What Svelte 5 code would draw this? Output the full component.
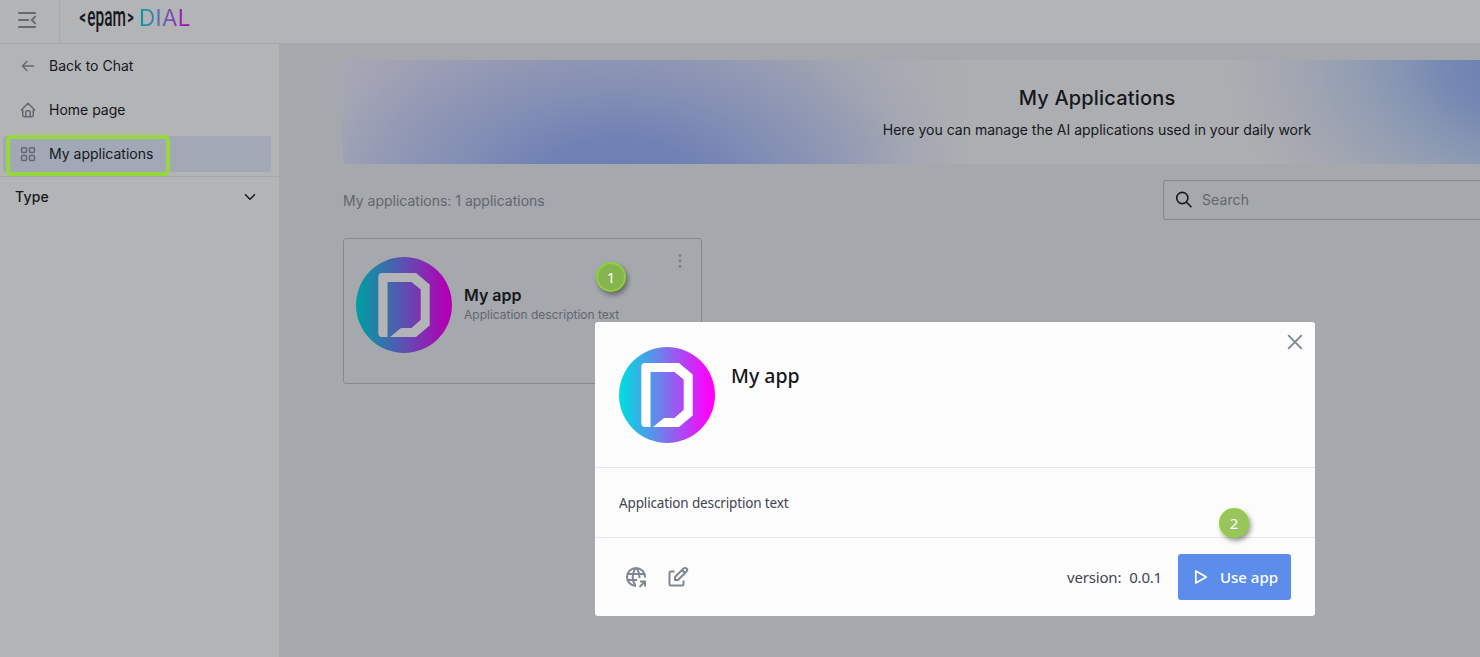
<script>
  const nav = [
    { label: 'Back to Chat', icon: 'back' },
    { label: 'Home page', icon: 'home' },
    { label: 'My applications', icon: 'apps', active: true }
  ];
</script>

{#snippet appLogo(id, from, mid, to, letter)}
  <svg class="app-logo" width="96" height="96" viewBox="0 0 96 96">
    <defs>
      <linearGradient id={id} x1="0" y1="0" x2="1" y2="0">
        <stop offset="0.02" stop-color={from} />
        <stop offset="0.5" stop-color={mid} />
        <stop offset="0.94" stop-color={to} />
      </linearGradient>
    </defs>
    <circle cx="48" cy="48" r="48" fill="url(#{id})" />
    <path fill={letter} fill-rule="evenodd" d="M26 16H60L73.700 27.500V68.500L60 80H34L45 71H55.500L64.700 62.700V32.500L55.500 25H31.500V80H26Q22.300 80 22.300 76V20Q22.300 16 26 16Z" />
  </svg>
{/snippet}

<div class="page">
  <header>
    <button class="toggle" aria-label="Toggle menu">
      <svg width="20" height="18" viewBox="0 0 20 18" fill="none" stroke="#636871" stroke-width="1.800">
        <path d="M0.300 2H17.800M0.300 9H10.800M0.300 16H17.800M17.600 5.200L13.800 9L17.600 12.800" />
      </svg>
    </button>
    <div class="brand">
      <svg class="epam" width="60" height="38" viewBox="0 0 60 38" fill="#15181d">
        <text transform="translate(0.500 24) scale(.62 1)" font-size="20" font-weight="700">&lt;</text>
        <text transform="translate(8.300 25.500) scale(.55 1)" font-size="28" font-weight="500">epam</text>
        <text transform="translate(48.300 24) scale(.62 1)" font-size="20" font-weight="700">&gt;</text>
      </svg>
      <span class="dial">DIAL</span>
    </div>
  </header>

  <div class="body">
    <aside>
      <nav>
        {#each nav as item}
          <a class="item" class:active={item.active} href="#{item.icon}">
            <svg width="18" height="18" viewBox="0 0 24 24" fill="none" stroke="#626771" stroke-width="2" stroke-linecap="round" stroke-linejoin="round">
              {#if item.icon === 'back'}
                <path d="M4.500 12H19.500M4.500 12L10.500 18M4.500 12L10.500 6" />
              {:else if item.icon === 'home'}
                <path d="M5 12H3L12 3L21 12H19M5 12V19A2 2 0 0 0 7 21H17A2 2 0 0 0 19 19V12M9 21V15A2 2 0 0 1 11 13H13A2 2 0 0 1 15 15V21" />
              {:else}
                <rect x="3.500" y="3.500" width="6.500" height="6.500" rx="1.200" />
                <rect x="14" y="3.500" width="6.500" height="6.500" rx="1.200" />
                <rect x="3.500" y="14" width="6.500" height="6.500" rx="1.200" />
                <rect x="14" y="14" width="6.500" height="6.500" rx="1.200" />
              {/if}
            </svg>
            <span>{item.label}</span>
          </a>
        {/each}
      </nav>
      <div class="filter">
        <span>Type</span>
        <svg width="12" height="8" viewBox="0 0 12 8" fill="none" stroke="#15181d" stroke-width="1.500"><path d="M1 1.200L6 6.200L11 1.200" /></svg>
      </div>
    </aside>

    <main>
      <section class="banner">
        <h1>My Applications</h1>
        <p>Here you can manage the AI applications used in your daily work</p>
      </section>
      <div class="tools">
        <span class="count">My applications: 1 applications</span>
        <div class="search">
          <svg width="18" height="18" viewBox="0 0 18 18" fill="none" stroke="#15181d" stroke-width="1.600"><circle cx="7.300" cy="7" r="5.600" /><path d="M11.300 11L16.500 16.200" /></svg>
          <span>Search</span>
        </div>
      </div>
      <article class="card">
        {@render appLogo('g-card', '#009da2', '#5d50b1', '#b100b5', '#b3b4b6')}
        <div class="card-text">
          <h2>My app</h2>
          <p>Application description text</p>
        </div>
        <svg class="dots" width="4" height="14" viewBox="0 0 4 14" fill="#7c8087"><circle cx="2" cy="1.700" r="1.400" /><circle cx="2" cy="7" r="1.400" /><circle cx="2" cy="12.300" r="1.400" /></svg>
      </article>
    </main>
  </div>

  <div class="highlight"></div>
  <div class="step one">1</div>

  <div class="modal" role="dialog" aria-label="My app">
    <div class="modal-head">
      {@render appLogo('g-modal', '#00dce0', '#8070ed', '#ff00ff', '#fff')}
      <h2>My app</h2>
      <svg class="close" width="16" height="16" viewBox="0 0 16 16" fill="none" stroke="#7f8792" stroke-width="1.900"><path d="M1.200 1.200L14.800 14.800M14.800 1.200L1.200 14.800" /></svg>
    </div>
    <div class="modal-body">Application description text</div>
    <footer>
      <svg class="world" width="24" height="24" viewBox="0 0 24 24" fill="none" stroke="#7f8792" stroke-width="2">
        <path d="M21 12.500A9 9 0 1 0 12 21M3.600 9H20.400M3.600 15H13M11.500 3A17 17 0 0 0 11.500 21M12.500 3A17 17 0 0 1 15.500 13" />
        <path d="M15.500 22L21 16.500M16 16.500H21V21.500" />
      </svg>
      <svg width="24" height="24" viewBox="0 0 24 24" fill="none" stroke="#7f8792" stroke-width="2" stroke-linejoin="round">
        <path d="M8.500 6.500H5A1.500 1.500 0 0 0 3.500 8V19A1.500 1.500 0 0 0 5 20.500H16A1.500 1.500 0 0 0 17.500 19V15.500" />
        <path d="M9 15H12L20.500 6.500A2.100 2.100 0 0 0 17.500 3.500L9 12V15ZM16 5L19 8" />
      </svg>
      <span class="version">version:</span>
      <span class="number">0.0.1</span>
      <button class="use">
        <svg width="14" height="16" viewBox="0 0 14 16" fill="none" stroke="#fff" stroke-width="1.700" stroke-linejoin="round"><path d="M1.800 2V14L12.300 8Z" /></svg>
        <span>Use app</span>
      </button>
    </footer>
  </div>
  <div class="step two">2</div>
</div>

<style>
  :global(body) { margin: 0; overflow: hidden; }
  * { box-sizing: border-box; }
  .page { position: relative; width: 1480px; height: 657px; overflow: hidden; display: flex; flex-direction: column; background: #a5a8ad; color: #15181d; font-family: Inter, sans-serif; }
  h1, h2, p { margin: 0; }
  button { border: 0; padding: 0; background: none; }
  header { height: 44px; flex: none; display: flex; background: #b3b4b6; border-bottom: 1px solid #a5a8ad; }
  .toggle { width: 60px; height: 43px; flex: none; display: flex; align-items: flex-start; padding: 11px 0 0 18px; border-right: 1px solid #a5a8ad; }
  .brand { display: flex; padding-left: 19px; }
  .epam { font-family: Roboto, sans-serif; flex: none; overflow: visible; }
  .dial { height: 37px; line-height: 36px; font-size: 22.500px; font-weight: 400; letter-spacing: .3px; background: linear-gradient(90deg, #009da2, #4977b5 35%, #7850b5 60%, #b100b5 92%); background-clip: text; color: transparent; }
  .body { flex: 1; display: flex; min-height: 0; }
  aside { width: 279px; flex: none; background: #b3b4b6; }
  nav { padding: 4px 8px 4px 3px; display: flex; flex-direction: column; gap: 8px; border-bottom: 1px solid #a5a8ad; }
  .item { height: 36px; display: flex; align-items: center; gap: 12px; padding-left: 16px; border-radius: 3px; color: #15181d; text-decoration: none; font-size: 14px; }
  .item span { padding-bottom: 1px; }
  .active { background: #a2a8b5; }
  .filter { height: 39px; display: flex; justify-content: space-between; align-items: center; padding: 0 23px 0 15px; font-size: 14px; font-weight: 500; letter-spacing: .2px; }
  main { flex: 1; min-width: 0; padding: 16px 0 0 64px; }
  .banner { width: 1508px; height: 104px; border-radius: 4px; text-align: center; background:
    radial-gradient(ellipse 310px 220px at 1190px 0, #667bb3 0%, #6b80b3 12%, #7688b3 28%, #8595b2 43%, #949fb2 59%, #a2a6b1 77%, #aaabb1 90%, rgba(173,174,177,0) 100%),
    radial-gradient(ellipse 350px 205px at 275px 130px, #687eb4 0%, #7281b5 25%, rgba(128,141,180,.95) 46%, rgba(142,150,180,.75) 68%, rgba(156,160,180,.35) 86%, rgba(173,174,177,0) 100%),
    linear-gradient(90deg, #a6a8b5 0, #a09fb4 90px, #9c9db3 300px, #a0a5b0 460px, #a7aab2 540px, #adaeb1 630px); }
  .banner h1 { padding-top: 24px; font-size: 20px; line-height: 28px; font-weight: 500; letter-spacing: .18px; }
  .banner p { margin-top: 8px; font-size: 14px; line-height: 20px; }
  .tools { margin-top: 16px; display: flex; align-items: center; justify-content: space-between; height: 40px; }
  .count { font-size: 14px; padding-top: 1px; color: #62666e; }
  .search { width: 317px; height: 40px; display: flex; align-items: center; gap: 9px; padding-left: 11px; border: 1px solid #85898f; border-right: 0; border-radius: 3px 0 0 3px; color: #62666e; font-size: 14px; }
  .search span { padding-bottom: 1px; letter-spacing: .1px; }
  .card { position: relative; margin-top: 18px; width: 359px; height: 146px; display: flex; gap: 12px; padding: 18px 12px; border: 1px solid #85898f; border-radius: 3px; }
  .app-logo { display: block; flex: none; }
  .card-text { padding-top: 28px; }
  .card h2 { font-size: 16px; line-height: 20px; font-weight: 600; }
  .card p { margin-top: 1px; font-size: 12px; line-height: 18px; color: #62666e; white-space: nowrap; }
  .dots { position: absolute; right: 19px; top: 15px; }
  .highlight { position: absolute; left: 6px; top: 135px; width: 164px; height: 41px; border: 4px solid #96d83d; border-radius: 5px; }
  .step { position: absolute; width: 30px; height: 30px; border-radius: 50%; border: 2px solid #90d13b; background: #86b44e; color: #fff; box-shadow: 2px 3px 5px rgba(0,0,0,.4); font: 15px/26px "Noto Sans", sans-serif; text-align: center; }
  .one { left: 596px; top: 262px; }
  .two { left: 1219px; top: 508px; background: #98c55e; }
  .modal { position: absolute; left: 595px; top: 322px; width: 720px; height: 294px; display: flex; flex-direction: column; background: #fcfcfc; border-radius: 3px; font-family: "Noto Sans", "Open Sans", sans-serif; }
  .modal-head { position: relative; height: 146px; display: flex; gap: 16px; padding: 25px 24px; border-bottom: 1px solid #e5e7ea; }
  .modal h2 { font-size: 19.500px; line-height: 28px; font-weight: 500; padding-top: 15px; }
  .close { position: absolute; right: 12px; top: 12px; }
  .modal-body { height: 70px; padding: 24px; line-height: 22px; font-size: 13.500px; letter-spacing: -.14px; color: #40454e; border-bottom: 1px solid #e5e7ea; }
  footer { flex: 1; display: flex; align-items: center; padding: 0 24px 0 29px; font-size: 15px; color: #40454e; }
  .world { margin-right: 18px; }
  .version { margin-left: auto; letter-spacing: -.2px; }
  .number { margin: 0 16px 0 8px; letter-spacing: -.2px; }
  .use { width: 113px; height: 46px; display: flex; align-items: center; gap: 12px; padding-left: 16px; border-radius: 3px; background: #5c8dea; color: #fff; font: 500 15px "Noto Sans", sans-serif; white-space: nowrap; }
</style>
